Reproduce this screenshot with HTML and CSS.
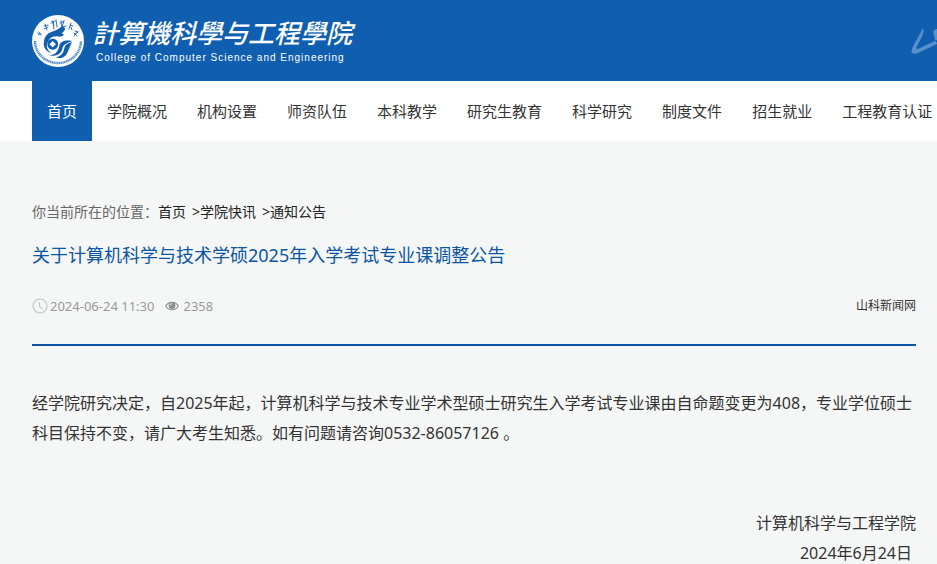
FILE: index.html
```html
<!DOCTYPE html>
<html lang="zh-CN">
<head>
<meta charset="utf-8">
<meta name="viewport" content="width=device-width, initial-scale=1">
<title>关于计算机科学与技术学硕2025年入学考试专业课调整公告</title>
<link rel="stylesheet" href="styles.css">
</head>
<body>
<header class="banner">
  <a class="brand" href="#">
    <svg class="emblem" viewBox="0 0 52 52" aria-hidden="true">
      <circle cx="26" cy="26" r="26" fill="#fff"/>
      <path d="M3 26A23 22 0 0 0 49 26" fill="none" stroke="#4c88c5" stroke-width="2.400" stroke-dasharray="1.300 .5"/>
      <g fill="none" stroke="#2a6fb8" stroke-width="1" stroke-linecap="round">
        <path d="M6 18l1 2 2-1M7 17l2 3M12 11l4-1M13 9l2 6M12 14l4-2M20 6l2 4M19 8l4-2M21 6l1 8M24 5l1 7M29 6l1 6M28 8l4-2M32 6l-2 6 4-1M38 10l3 1M39 8l-2 6M39 12l1 3M43 16l3 1M44 18l-2 3M42 18l3 3M46 17l-3 2"/>
      </g>
      <g fill="#0f5eb0" transform="translate(-2 -1) scale(1.08)">
        <path d="M13 25C14 18 19 17 24 15C28 13 29 11 31 12C34 13 32 16 29 18C33 18 31 21 27 21C23 20 19 21 17 25C14 29 16 34 20 36C14 35 12 30 13 25Z"/>
        <path fill-rule="evenodd" d="M21 23a5 5 0 1 0 .1 0zM21 25l3 3-3 3-3-3z"/>
        <path d="M15 37C22 40 26 35 27 30C28 25 33 24 39 25C34 27 31 28 30 32C29 37 24 41 15 37ZM24 40C30 39 31 35 32 31C33 28 36 27 39 26C37 29 36 34 34 37C31 41 27 42 24 40Z"/>
      </g>
    </svg>
    <span class="names">
      <span class="name" lang="zh-TW">計算機科學与工程學院</span>
      <span class="name-en" lang="en">College of Computer Science and Engineering</span>
    </span>
  </a>
  <svg class="flourish" viewBox="0 0 26 30" aria-hidden="true">
    <path d="M12 2C8 10 3 18 1 23C-1 28 3 29 9 26L26 18V14L7 23C5 24 5 22 7 18C10 13 14 6 12 2ZM22 6C24 2 26 3 26 3V17C23 15 24 10 22 6Z" fill="#5990ca"/>
  </svg>
</header>
<nav class="menu">
  <a class="item current" href="#">首页</a>
  <a class="item" href="#">学院概况</a>
  <a class="item" href="#">机构设置</a>
  <a class="item" href="#">师资队伍</a>
  <a class="item" href="#">本科教学</a>
  <a class="item" href="#">研究生教育</a>
  <a class="item" href="#">科学研究</a>
  <a class="item" href="#">制度文件</a>
  <a class="item" href="#">招生就业</a>
  <a class="item" href="#">工程教育认证</a>
</nav>
<main class="content">
  <div class="crumbs"><span>你当前所在的位置：</span><a href="#">首页</a><a href="#">&gt;学院快讯</a><a href="#">&gt;通知公告</a></div>
  <article>
    <h1 class="title">关于计算机科学与技术学硕2025年入学考试专业课调整公告</h1>
    <div class="meta">
      <svg class="clock" viewBox="0 0 16 16" aria-hidden="true"><circle cx="8" cy="8" r="7" fill="none" stroke="#c4c6c5" stroke-width="1.2"/><path d="M7.500 4v4.500l3 2.500" fill="none" stroke="#c4c6c5" stroke-width="1.200"/></svg>
      <time datetime="2024-06-24T11:30">2024-06-24 11:30</time>
      <svg class="eye" viewBox="0 0 14 10" aria-hidden="true"><path d="M.6 5C3.500.1 10.500.1 13.400 5C10.500 9.900 3.500 9.900.6 5Z" fill="none" stroke="#8e908f" stroke-width="1.100"/><circle cx="7" cy="4.500" r="3.400" fill="#8e908f"/><path d="M5 4.500A2 2 0 0 1 7 2.500" fill="none" stroke="#f5f7f6" stroke-width=".9"/></svg>
      <span>2358</span>
      <a class="source" href="#">山科新闻网</a>
    </div>
    <div class="body">
      <p>经学院研究决定，自2025年起，计算机科学与技术专业学术型硕士研究生入学考试专业课由自命题变更为408，专业学位硕士科目保持不变，请广大考生知悉。如有问题请咨询0532-86057126 。</p>
      <div class="signature">
        <p>计算机科学与工程学院</p>
        <p class="date">2024年6月24日</p>
      </div>
    </div>
  </article>
</main>
</body>
</html>
```
FILE: styles.css
```css
* { box-sizing: border-box; }

body {
  margin: 0;
  overflow: hidden;
  background: #f5f7f6;
  color: #333;
  font-family: "Noto Sans", "Noto Sans CJK SC", sans-serif;
  font-size: 16px;
  line-height: 30px;
}

a { color: inherit; text-decoration: none; }
p { margin: 0; }

.banner {
  display: flex;
  align-items: center;
  justify-content: space-between;
  padding: 14px 0 14px 32px;
  background: #0f5eb0;
}

.brand { display: flex; align-items: center; gap: 8px; color: #fff; }
.emblem { width: 52px; height: 52px; }
.names { display: flex; flex-direction: column; gap: 2px; padding-bottom: 3px; }
.name {
  font: italic 500 26px/36px "Noto Sans CJK TC", sans-serif;
  white-space: nowrap;
}
.name-en {
  padding-left: 4px;
  font: 10px/12px "Liberation Sans", sans-serif;
  letter-spacing: 1px;
  white-space: nowrap;
}
.flourish { width: 26px; height: 30px; }

.menu {
  display: flex;
  overflow: hidden;
  padding-left: 32px;
  background: #fff;
}
.item {
  flex: none;
  padding: 0 15px;
  font-size: 15px;
  line-height: 60px;
}
.item.current { background: #0f5eb0; color: #fff; }

.content { padding: 56px 21px 0 32px; }

.crumbs { display: flex; color: #666; font-size: 14px; }
.crumbs a { margin-right: 6px; color: #222; }

.title {
  margin: 8px 0 0;
  color: #0b55a4;
  font-size: 18px;
  font-weight: 400;
  line-height: 40px;
}

.meta {
  display: flex;
  align-items: center;
  padding: 16px 0 23px;
  border-bottom: 2px solid #0b55a4;
  color: #999;
  font-size: 13px;
}
.clock { width: 16px; height: 16px; margin-right: 2px; }
.eye { width: 14px; height: 10px; margin: 0 4px 0 11px; }
.source { margin-left: auto; color: #333; font-size: 12px; }

.body { padding-top: 42px; }
.signature { display: flex; flex-direction: column; align-items: flex-end; margin-top: 60px; }
.date { padding-right: 4px; }
```
